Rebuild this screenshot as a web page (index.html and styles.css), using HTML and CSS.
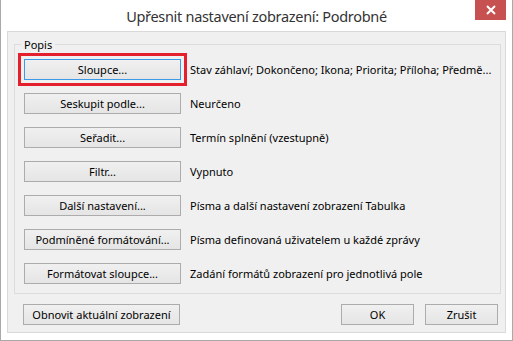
FILE: index.html
```html
<!DOCTYPE html>
<html lang="cs">
<head>
  <meta charset="UTF-8">
  <title>Upřesnit nastavení zobrazení: Podrobné</title>
  <link rel="stylesheet" href="styles.css">
</head>
<body>
  <div class="window">
    <div class="title-bar">
      <span></span>
      <h1 class="title">Upřesnit nastavení zobrazení: Podrobné</h1>
      <button class="close-btn" aria-label="Zavřít">
        <svg width="10" height="10" viewBox="0 0 10 10">
          <path d="M1 1 L9 9 M9 1 L1 9" stroke="#fff" stroke-width="2"/>
        </svg>
      </button>
    </div>

    <div class="client">
      <fieldset class="group">
        <legend>Popis</legend>
        <div class="row">
          <button class="btn focused">Sloupce...</button>
          <span class="desc">Stav záhlaví; Dokončeno; Ikona; Priorita; Příloha; Předmě...</span>
        </div>
        <div class="row">
          <button class="btn">Seskupit podle...</button>
          <span class="desc">Neurčeno</span>
        </div>
        <div class="row">
          <button class="btn">Seřadit...</button>
          <span class="desc">Termín splnění (vzestupně)</span>
        </div>
        <div class="row">
          <button class="btn">Filtr...</button>
          <span class="desc">Vypnuto</span>
        </div>
        <div class="row">
          <button class="btn">Další nastavení...</button>
          <span class="desc">Písma a další nastavení zobrazení Tabulka</span>
        </div>
        <div class="row">
          <button class="btn">Podmíněné formátování...</button>
          <span class="desc">Písma definovaná uživatelem u každé zprávy</span>
        </div>
        <div class="row">
          <button class="btn">Formátovat sloupce...</button>
          <span class="desc">Zadání formátů zobrazení pro jednotlivá pole</span>
        </div>
      </fieldset>

      <div class="footer">
        <button class="btn">Obnovit aktuální zobrazení</button>
        <div class="footer-right">
          <button class="btn small">OK</button>
          <button class="btn small">Zrušit</button>
        </div>
      </div>
    </div>
  </div>
</body>
</html>
```

FILE: styles.css
```css
/* General */
body {
    margin: 0;
    padding: 0;
    font-family: 'Noto Sans', 'Open Sans', sans-serif;
    font-size: 11px;
    color: #000;
    background: #fff;
}

.window {
    width: 513px;
    height: 341px;
    box-sizing: border-box;
    border: 1px solid #a9a9a9;
    border-top: none;
    background: #fff;
    display: flex;
    flex-direction: column;
}

/* Title bar */
.title-bar {
    height: 31px;
    display: grid;
    grid-template-columns: 1fr auto 1fr;
    align-items: start;
}

.title {
    margin: 0;
    padding-top: 6px;
    font-size: 14.5px;
    letter-spacing: -0.3px;
    font-weight: normal;
    line-height: 20px;
    color: #333;
}

.close-btn {
    justify-self: end;
    margin-right: 6px;
    width: 31px;
    height: 20px;
    padding: 0;
    border: none;
    background: #c75050;
    display: flex;
    align-items: center;
    justify-content: center;
}

/* Client area */
.client {
    flex: 1;
    margin: 0 6px 7px 6px;
    border: 1px solid #d9d9d9;
    background: #f0f0f0;
    display: flex;
    flex-direction: column;
}

/* Group box */
.group {
    margin: 5px 6px 0 6px;
    padding: 0 9px 9px 9px;
    border: 1px solid #dcdcdc;
    display: flex;
    flex-direction: column;
    gap: 13px;
}

.group legend {
    padding: 0 3px;
    margin-left: -3px;
    line-height: 15px;
    margin-bottom: 7px;
}

.row {
    display: flex;
    align-items: center;
    gap: 9px;
}

.desc {
    white-space: nowrap;
}

/* Buttons */
.btn {
    width: 157px;
    height: 21px;
    padding: 0;
    box-sizing: border-box;
    border: 1px solid #acacac;
    background: linear-gradient(#f0f0f0, #e5e5e5);
    font-family: inherit;
    font-size: 11px;
    color: #000;
    line-height: 17px;
}

.btn.focused {
    border-color: #3c9ae8;
    outline: 3px solid #e3202b;
    outline-offset: 3px;
}

.btn.small {
    width: 73px;
}

/* Footer */
.footer {
    display: flex;
    justify-content: space-between;
    padding: 10px 7px 0 15px;
}

.footer-right {
    display: flex;
    gap: 11px;
}
```
